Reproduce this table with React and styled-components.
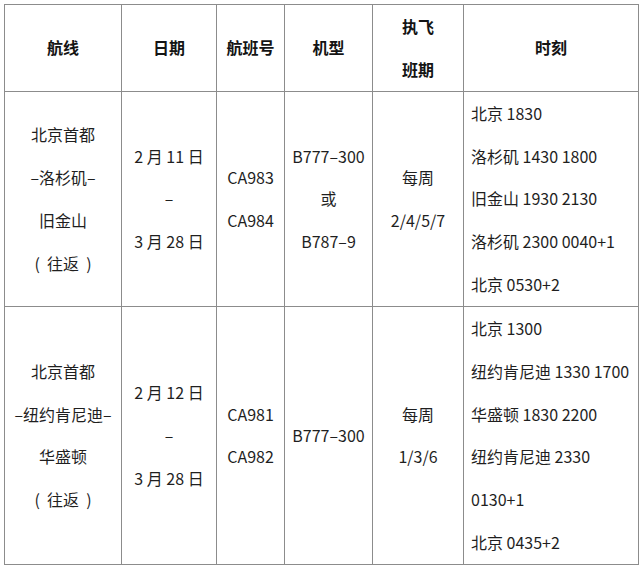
import React from "react";
import styled, { createGlobalStyle } from "styled-components";

const Global = createGlobalStyle`
  html, body { margin: 0; padding: 0; background: #fff; }
  body { font-family: "Noto Sans CJK SC", "Noto Sans", sans-serif; color: #1f1f1f; }
`;

const Page = styled.div`
  padding: 4px 0 0 4px;
`;

const Table = styled.table`
  border-collapse: collapse;
  table-layout: fixed;
  width: 634px;
  font-size: 16px;
  line-height: 42.85px;
`;

const Cell = styled.td`
  border: 1px solid #8c8c8c;
  padding: 0 ${(p) => (p.$left ? "7px" : "0")};
  text-align: ${(p) => (p.$left ? "left" : "center")};
  vertical-align: middle;
  white-space: pre;
`;

const Head = styled.th`
  border: 1px solid #8c8c8c;
  padding: 0;
  height: 85.7px;
  font-weight: 700;
  color: #141414;
  text-align: center;
  vertical-align: middle;
`;

const Line = styled.div`
  height: 42.85px;
`;

const widths = [117, 95, 68, 88, 91, 175];

const rows = [
  {
    route: ["北京首都", "–洛杉矶–", "旧金山", "(  往返  )"],
    date: ["2 月 11 日", "–", "3 月 28 日"],
    flight: ["CA983", "CA984"],
    plane: ["B777–300", "或", "B787–9"],
    sched: ["每周", "2/4/5/7"],
    times: ["北京 1830", "洛杉矶 1430 1800", "旧金山 1930 2130", "洛杉矶 2300 0040+1", "北京 0530+2"],
  },
  {
    route: ["北京首都", "–纽约肯尼迪–", "华盛顿", "(  往返  )"],
    date: ["2 月 12 日", "–", "3 月 28 日"],
    flight: ["CA981", "CA982"],
    plane: ["B777–300"],
    sched: ["每周", "1/3/6"],
    times: ["北京 1300", "纽约肯尼迪 1330 1700", "华盛顿 1830 2200", "纽约肯尼迪 2330", "0130+1", "北京 0435+2"],
  },
];

const Lines = ({ items }) => items.map((t, i) => <Line key={i}>{t}</Line>);

export default function App() {
  return (
    <Page>
      <Global />
      <Table>
        <colgroup>
          {widths.map((w, i) => (
            <col key={i} style={{ width: w }} />
          ))}
        </colgroup>
        <thead>
          <tr>
            <Head>航线</Head>
            <Head>日期</Head>
            <Head>航班号</Head>
            <Head>机型</Head>
            <Head>
              <Line>执飞</Line>
              <Line>班期</Line>
            </Head>
            <Head>时刻</Head>
          </tr>
        </thead>
        <tbody>
          {rows.map((r, i) => (
            <tr key={i}>
              <Cell><Lines items={r.route} /></Cell>
              <Cell><Lines items={r.date} /></Cell>
              <Cell><Lines items={r.flight} /></Cell>
              <Cell><Lines items={r.plane} /></Cell>
              <Cell><Lines items={r.sched} /></Cell>
              <Cell $left><Lines items={r.times} /></Cell>
            </tr>
          ))}
        </tbody>
      </Table>
    </Page>
  );
}
